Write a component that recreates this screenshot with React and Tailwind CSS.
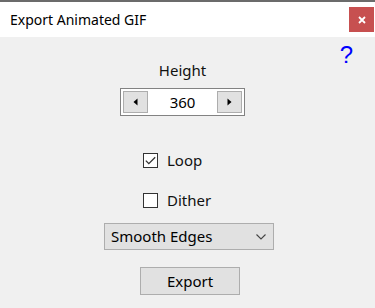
import { useState } from 'react';

const font = { fontFamily: '"Noto Sans", "Open Sans", sans-serif' };

function Arrow({ dir }) {
    return (
        <svg width="5" height="8" viewBox="0 0 5 8">
            {dir === 'left'
                ? <path d="M4.5 0.5 L0.5 4 L4.5 7.5 Z" fill="#000" />
                : <path d="M0.5 0.5 L4.5 4 L0.5 7.5 Z" fill="#000" />}
        </svg>
    );
}

function CheckRow({ label, checked, onToggle }) {
    return (
        <div className="flex items-center h-[15px] pl-[143px] cursor-default" onClick={onToggle}>
            <div className="w-[15px] h-[15px] border border-[#333333] bg-white flex items-center justify-center">
                {checked && (
                    <svg width="11" height="9" viewBox="0 0 11 9">
                        <path d="M0.8 4.6 L3.8 7.6 L10.2 1.2" stroke="#333" strokeWidth="1.3" fill="none" />
                    </svg>
                )}
            </div>
            <span className="ml-[9px] text-[15px] text-[#111] leading-none">{label}</span>
        </div>
    );
}

export default function App() {
    const [height, setHeight] = useState(360);
    const [loop, setLoop] = useState(true);
    const [dither, setDither] = useState(false);

    return (
        <div className="w-[375px] h-[308px] bg-[#f0f0f0] overflow-hidden" style={font}>
            {/* Title bar */}
            <div className="h-[37px] bg-white border-t-2 border-[#6b6b6b] flex items-center justify-between">
                <span className="pl-[10px] text-[14px] text-black">Export Animated GIF</span>
                <button className="w-[25px] h-[25px] mr-[1px] bg-[#c75050] flex items-center justify-center">
                    <svg width="8" height="8" viewBox="0 0 8 8">
                        <path d="M1 1 L7 7 M7 1 L1 7" stroke="#fff" strokeWidth="1.8" />
                    </svg>
                </button>
            </div>

            {/* Body */}
            <div className="relative flex flex-col">
                <span className="absolute right-[22px] top-[6px] text-[24px] leading-none text-[#0000ff]" style={{ fontFamily: '"Liberation Sans", Arial, sans-serif' }}>?</span>

                <div className="mt-[23px] ml-[120px] w-[125px] h-[20px] text-center text-[15px] leading-[20px] text-[#111]">Height</div>

                <div className="mt-[8px] ml-[120px] w-[125px] h-[28px] border border-[#828282] bg-white p-[2px] flex items-center">
                    <button className="w-[25px] h-[22px] border border-[#adadad] bg-[#e1e1e1] flex items-center justify-center" onClick={() => setHeight(height - 1)}>
                        <Arrow dir="left" />
                    </button>
                    <span className="flex-1 text-center text-[15px] text-black">{height}</span>
                    <button className="w-[25px] h-[22px] border border-[#adadad] bg-[#e1e1e1] flex items-center justify-center" onClick={() => setHeight(height + 1)}>
                        <Arrow dir="right" />
                    </button>
                </div>

                <div className="mt-[37px]">
                    <CheckRow label="Loop" checked={loop} onToggle={() => setLoop(!loop)} />
                </div>
                <div className="mt-[25px]">
                    <CheckRow label="Dither" checked={dither} onToggle={() => setDither(!dither)} />
                </div>

                <div className="mt-[15px] ml-[104px] w-[170px] h-[27px] border border-[#adadad] bg-[#e1e1e1] flex items-center justify-between pl-[6px] pr-[7px]">
                    <span className="text-[15px] text-black">Smooth Edges</span>
                    <svg width="10" height="6" viewBox="0 0 10 6">
                        <path d="M0.5 0.5 L5 5 L9.5 0.5" stroke="#444" strokeWidth="1.1" fill="none" />
                    </svg>
                </div>

                <button className="mt-[17px] ml-[140px] w-[100px] h-[28px] border border-[#adadad] bg-[#e1e1e1] text-[15px] text-black">
                    Export
                </button>
            </div>
        </div>
    );
}
